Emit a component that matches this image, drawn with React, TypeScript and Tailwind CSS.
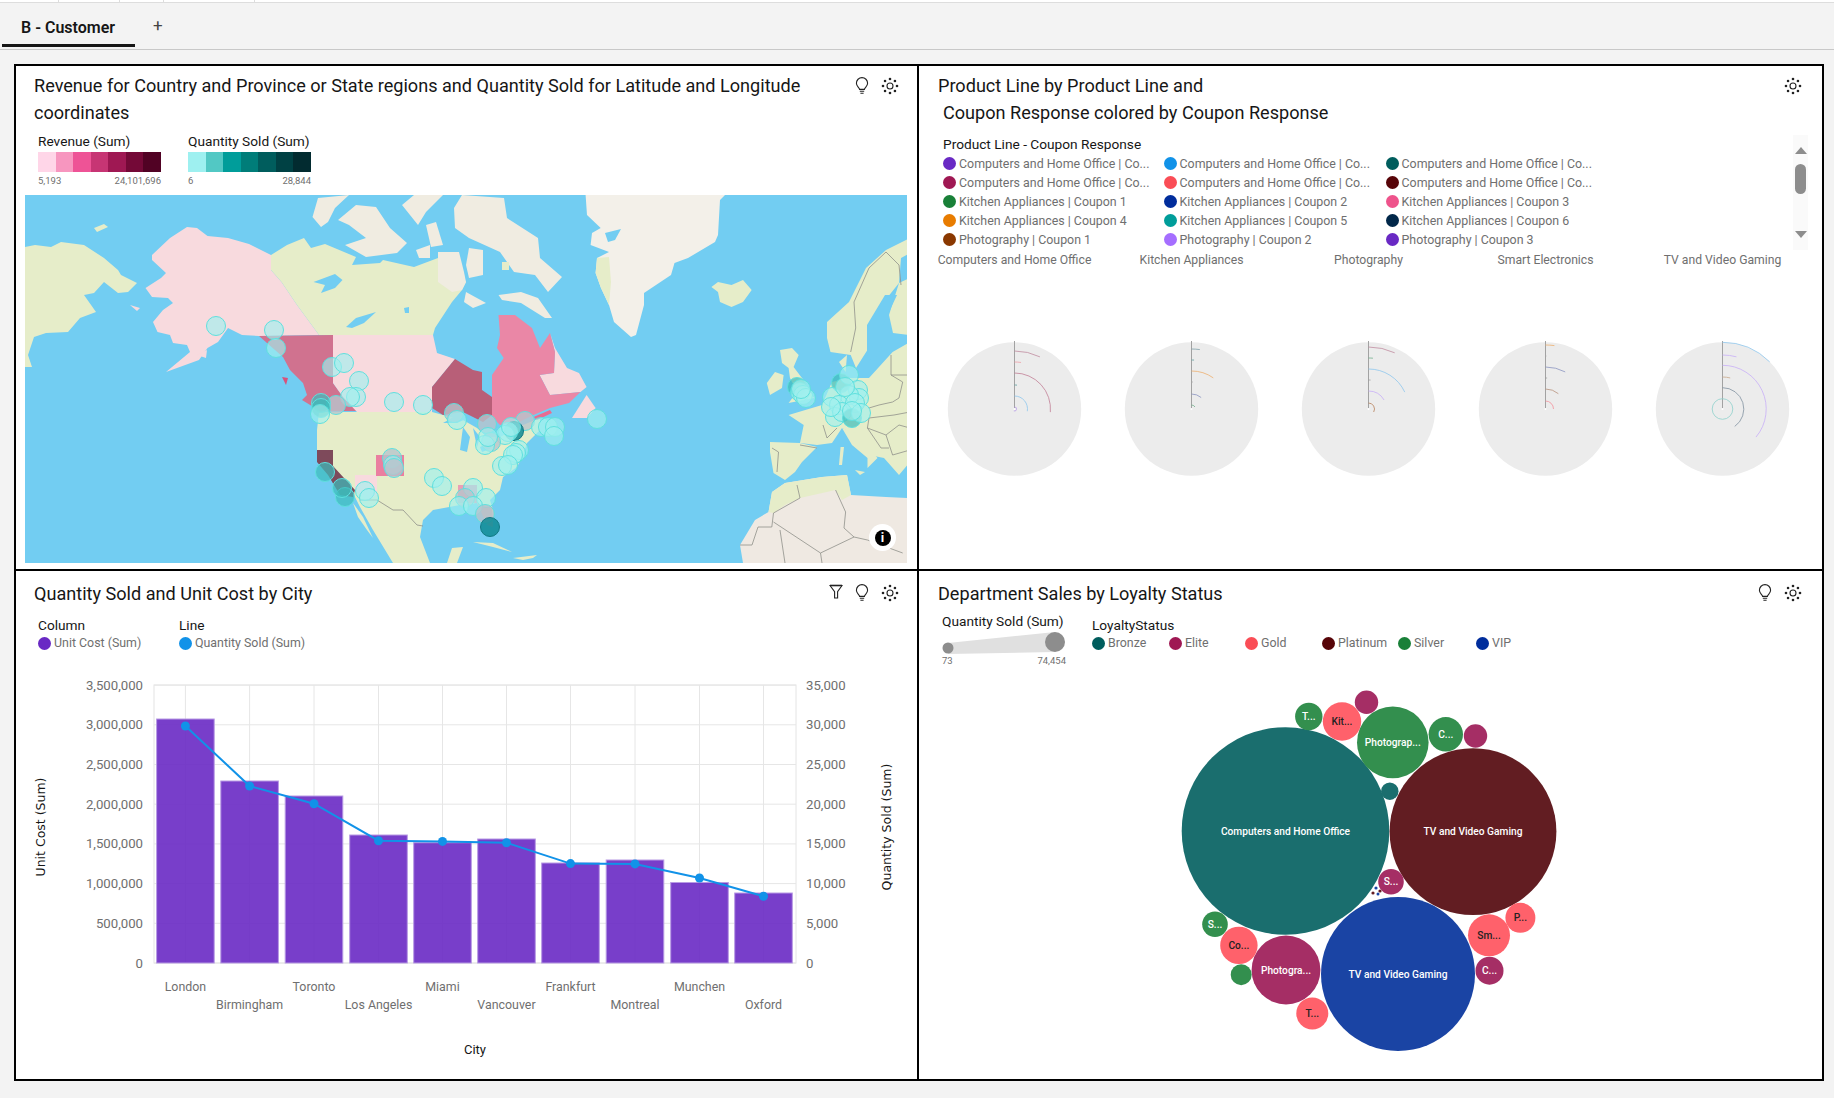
import React from 'react';

const FONT = "font-['Roboto','Liberation_Sans',sans-serif]";

function GearIcon() {
  const dots = [0, 45, 90, 135, 180, 225, 270, 315];
  return (
    <svg width="18" height="18" viewBox="0 0 18 18" className="shrink-0">
      <circle cx="9" cy="9" r="3" fill="none" stroke="#222" strokeWidth="1.1" />
      {dots.map((a) => (
        <circle
          key={a}
          cx={9 + 7 * Math.cos((a * Math.PI) / 180)}
          cy={9 + 7 * Math.sin((a * Math.PI) / 180)}
          r="1.3"
          fill="#222"
        />
      ))}
    </svg>
  );
}

function BulbIcon() {
  return (
    <svg width="14" height="18" viewBox="0 0 14 18" fill="none" stroke="#222" strokeWidth="1.1" className="shrink-0">
      <path d="M4.6 12.4C4.4 10.6 1.4 9.4 1.4 6.2a5.6 5.6 0 0 1 11.2 0c0 3.2-3 4.4-3.2 6.2Z" />
      <path d="M4.8 14.2h4.4M5.4 16.2h3.2" />
    </svg>
  );
}

function FunnelIcon() {
  return (
    <svg width="14" height="16" viewBox="0 0 14 16" fill="none" stroke="#222" strokeWidth="1.1" className="shrink-0">
      <path d="M1 1.5h12L8.6 7.6V14H5.6V7.6Z" />
      <path d="M1 1.5h12" strokeWidth="1.6" />
    </svg>
  );
}

const REVENUE = ['bg-[#ffd6e8]', 'bg-[#f796bf]', 'bg-[#ee5396]', 'bg-[#c73574]', 'bg-[#9f1853]', 'bg-[#740937]', 'bg-[#510224]'];
const QTY = ['bg-[#9ef0f0]', 'bg-[#52c8c4]', 'bg-[#009d9a]', 'bg-[#007d79]', 'bg-[#005d5d]', 'bg-[#004144]', 'bg-[#022b30]'];

function ScaleLegend({ title, colors, min, max }: { title: string; colors: string[]; min: string; max: string }) {
  return (
    <div className="w-[123px]">
      <div className="text-[13.7px] leading-[18px] text-[#161616] whitespace-nowrap">{title}</div>
      <div className="flex h-[20px] mt-[2px]">
        {colors.map((c) => (
          <div key={c} className={`flex-1 ${c}`} />
        ))}
      </div>
      <div className="flex justify-between text-[9.5px] leading-[12px] mt-[3px] text-[#6f6f6f]">
        <span>{min}</span>
        <span>{max}</span>
      </div>
    </div>
  );
}

// map shapes are in the frame's own pixels (882 x 368)
const WATER = '#72cdf2';
const GREEN = '#e6edc9';
const ICE = '#f0ece1';
const PALE = '#f8dade';
const LAND: [string, string][] = [
  ['0,52 10,50 26,52 36,47 59,50 79,63 93,75 96,80 112,88 103,97 93,98 79,87 69,98 59,100 71,117 55,123 43,137 21,138 9,142 3,160 7,172 0,172', GREEN],
  ['69,33 79,29 83,32 72,37', GREEN],
  ['162,32 172,33 182.5,41 203,43 224,49 246,60 246,75 256.5,87 272,110 294,140 234,141 217,140 203,133 193,147 182.5,153 174,165 141,177 165,157 162,150 148,148 145,140 132.5,137 128,127 138,115 148,108 143,103 127,102 120.5,93 136,83 141,78 127,65 127,60 145,43', PALE],
  ['105,110 115,113 112,116', PALE],
  ['172,160 182,155 181,163', PALE],
  ['246,60 262,50 279,43 286,53 300,49 331,62 327,70 355,68 358,65 389,72 413,63 441,87 437,95 427,107 410,133 408,140 294,140 272,110 256.5,87 246,75', GREEN],
  ['293,3 324,0 310,13 303,27 296,32 287.5,22', ICE],
  ['313,25 331,10 351,12 365,33 382,48 372,58 341,62 320,50 341,43 324,30', ICE],
  ['377,10 389,0 418,0 401,17 393,30', ICE],
  ['401,30 411,27 418,50 406,52', ICE],
  ['391,55 405,50 405,63 394,63', ICE],
  ['413,57 434,57 439,77 441,87 437,95 427,97 413,87', ICE],
  ['429,13 437,0 479,3 482,23 513,43 515,63 537,82 523,97 510,80 489,77 475,57 444,43 430,33', ICE],
  ['444,53 458,55 458,80 444,83 441,70', ICE],
  ['473.5,100 496,97 513,103 527,123 520,123 496,108 477,105', ICE],
  ['441,97 461,108 448,113 439,107', ICE],
  ['477,67 484,67 484,75 477,75', GREEN],
  ['234,141 308,140 308,188 318,202 332,216 295,216 277,205 282,200 278,188 265,175 258,162', '#d0728f'],
  ['257,182 263,183 261,190', '#d8527c'],
  ['308,140 408,140 412,158 430,164 407,192 407,217 332,217 318,202 308,188', PALE],
  ['294,217 407,217 418,220 438,225 452,233 462,242 475,242 498,230 515,223 515,235 502,248 498,260 492,272 478,282 475,295 465,305 468,315 467,332 462,325 452,308 435,310 408,315 398,325 395,342 405,368 368,368 348,335 335,312 330,302 308,275 292,260 292,235', GREEN],
  ['430,164 448,175 457,177 457,195 467,202 467,220 458,227 448,222 438,217 418,220 407,213 407,192', '#b85f78'],
  ['525,138 530,157 529,178 514.6,180 525,200 555.5,197 561.6,192 554,178 542,173 530,153', PALE],
  ['473.5,120 490,120 507,133 515,153 525,138 530,157 529,178 514.6,180 525,200 555.5,197 544,208 525,213 508.5,220 492,228 475,230 467,222 467,180 478.7,163 472,153 475,140', '#ea87a6'],
  ['561.6,200 570.6,213 562,223 547,223', PALE],
  ['508.5,222 525,215 527,218 512,225', '#ea6c92'],
  ['292,255 308,255 308,271 330,295 328,302 315,300 303,280 292,267', '#7e4a5b'],
  ['330,280 352,280 352,300 342,305 330,295', PALE],
  ['351,260 379,260 379,281 351,281', '#ea7fa0'],
  ['433,290 452,290 452,308 433,308', '#ea9fb5'],
  ['452,308 467,312 468,332 462,330', '#c3b7bf'],
  ['328,308 338,322 348,343 342,335 333,322', GREEN],
  ['422,368 427,353 438,352 432,368', GREEN],
  ['448,347 468,348 487,357 468,352', GREEN],
  ['488,363 512,360 508,363 498,365', GREEN],
  ['560.6,0 700,0 695,5 693,40 690,47 663,63 649.5,68 646,80 619,98 619,110 611,140 606,142 589,127 584,110 576,93 570.6,78 572,63 584,57 565.6,50 567,38 575.7,33 562,20', '#f3f0e9'],
  ['570.6,78 572,63 584,62 586,87 584,110 576,93', GREEN],
  ['686.4,92 693,87 706.5,90 718,85 726.7,95 718,107 706.5,112 695,107 693,97', GREEN],
  ['755,155 767,153 773.7,160 768.6,172 780,187 788.8,203 763.6,208 772,197 765,183 763.6,173 757,168', GREEN],
  ['741.8,188 750,177 758.6,180 757,193 745,200', GREEN],
  ['802,127 824,107 841,73 861,55 885,43 885,58 876,63 874,88 854,113 849,130 847.5,147 831,173 825.7,160 805.5,157 802,143', GREEN],
  ['864,120 874,88 885,83 885,140 868,138', GREEN],
  ['814,167 822,160 820.6,177', GREEN],
  ['763.6,220 797,210 807,187 824,183 844,183 867.6,157 885,147 885,267 874,280 859,263 844,260 847.5,267 831,240 817,233 807,248 792,250 775,248 778.7,230', GREEN],
  ['817,233 831,238 852.5,263 842.5,273 842.5,263 827,250', GREEN],
  ['745,247 775,248 792,252 777,267 770,277 760,285 748.5,278 745,257', GREEN],
  ['815.6,252 819,252 817,270 814,270', GREEN],
  ['830,275 840,277 835,280', GREEN],
  ['715,350 730,325 743.5,317 747,297 760,288 797,282 822,280 826,300 861,302 885,303 885,368 718,368', '#efe9e2'],
  ['743.5,317 747,297 760,288 797,282 822,280 826,300 817,305 810.6,295 775,303 760,310 748.5,318', GREEN],
];
const LAKES = [
  '288.5,87 310,79 317.5,85 310,93 296,98 300,90',
  '321,132 331,123 351,117 339,128 327,133',
  '379,113 384,112 384,118 380,118',
  '418,228 432,220 443,223 432,228',
  '435,255 438,232 445,242 442,257',
  '448,233 455,242 452,252',
  '455,252 468,246 465,254 457,257',
  '842,130 860,100 872,100 858,130 858,150 848,168 842,160',
  '580,38 596,34 590,45 583,47',
];
const BORDERS = [
  'M748.5 318L775 303L772 290',
  'M748.5 327L795.5 358L829 342L842.4 345L877.7 358',
  'M810.6 295L820.6 317L819 333L829 342',
  'M755 335L760 368M795.5 358L797 368',
  'M715 350L727 350L733 332L746.8 332L748.5 318',
  'M861 57L844 73L829 107L830.7 133L825.7 157',
  'M861 57L874 70L876 90',
  'M844 213L854 210L867.6 207L874 203L877.7 187L866 180L866 160',
  'M844 223L869 220L885 217',
  'M842.4 233L861 240L867.6 260L885 255',
  'M861 240L874 230L885 233',
  'M844 223L842.4 233L856 253L864 253',
  'M866 180L885 180M798 230L802 243L812 233',
  'M775 250L792 253M747 253L753.5 257L752 277',
  'M335 305L352 305L368 315L378 315L392 330L398 331',
];
const DOTS: [number, number, number][] = [
  [191, 131, 0], [249, 135, 0], [251, 153, 0], [307, 172, 0], [319, 168, 0], [334, 186, 0], [331, 202, 0], [325, 202, 0],
  [369, 207, 0], [398, 210, 0], [311, 210, 3], [296, 208, 1], [296, 213, 1], [295, 219, 0], [429, 218, 3], [432, 225, 0],
  [462, 229, 3], [500, 226, 3], [489, 236, 2], [483, 237, 0], [480, 240, 0], [486, 232, 0], [466, 247, 3], [460, 250, 0],
  [463, 242, 0], [516, 232, 0], [523, 232, 0], [530, 232, 0], [529, 241, 0], [572, 224, 0], [494, 255, 0], [491, 258, 0],
  [488, 260, 0], [477, 271, 0], [483, 270, 0], [367, 263, 3], [368, 270, 0], [369, 273, 3], [409, 283, 0], [417, 291, 0],
  [340, 296, 0], [344, 303, 0], [300, 277, 1], [320, 302, 1], [317, 293, 1], [448, 293, 0], [440, 303, 3], [461, 303, 0],
  [434, 311, 0], [448, 311, 0], [460, 319, 3], [465, 332, 2],
  [772, 192, 1], [775, 197, 0], [778, 200, 0], [781, 203, 0], [776, 194, 0],
  [816, 188, 1], [824, 180, 0], [833, 195, 0], [834, 203, 0], [824, 200, 0], [807, 202, 0], [814, 210, 0], [820, 192, 0],
  [830, 208, 0], [810, 222, 0], [817, 217, 0], [827, 223, 1], [836, 218, 0], [827, 216, 0], [806, 212, 0],
];
const DOT_FILL = ['#a0f0ee', '#3cbcbc', '#0e8a94', '#b8c4cc'];
const DOT_ALPHA = [0.65, 0.7, 0.85, 0.8];

function MapView() {
  return (
    <div className="relative w-[882px] h-[368px] ml-[9px] mt-[8px] overflow-hidden">
      <svg viewBox="0 0 882 368" className="block w-full h-full">
        <rect width="882" height="368" fill={WATER} />
        {LAND.map(([points, fill], i) => (
          <polygon key={i} points={points} fill={fill} />
        ))}
        {LAKES.map((points, i) => (
          <polygon key={i} points={points} fill={WATER} />
        ))}
        {BORDERS.map((d, i) => (
          <path key={i} d={d} fill="none" stroke="#8f918a" strokeWidth="0.8" />
        ))}
        {DOTS.map(([x, y, kind], i) => (
          <circle
            key={i}
            cx={x}
            cy={y}
            r="9.5"
            fill={DOT_FILL[kind]}
            fillOpacity={DOT_ALPHA[kind]}
            stroke={kind === 2 ? '#127a84' : '#5fe0de'}
            strokeWidth="1"
          />
        ))}
      </svg>
      <div className="absolute right-[11px] bottom-[12px] w-[27px] h-[27px] rounded-full bg-white flex items-center justify-center">
        <span className="w-[16px] h-[16px] rounded-full bg-black flex items-center justify-center text-white text-[13px] font-bold leading-none">
          i
        </span>
      </div>
    </div>
  );
}

const COUPONS: [string, string][] = [
  ['bg-[#6929c4]', 'Computers and Home Office | Co...'],
  ['bg-[#1192e8]', 'Computers and Home Office | Co...'],
  ['bg-[#005d5d]', 'Computers and Home Office | Co...'],
  ['bg-[#9f1853]', 'Computers and Home Office | Co...'],
  ['bg-[#fa4d56]', 'Computers and Home Office | Co...'],
  ['bg-[#570408]', 'Computers and Home Office | Co...'],
  ['bg-[#198038]', 'Kitchen Appliances | Coupon 1'],
  ['bg-[#002d9c]', 'Kitchen Appliances | Coupon 2'],
  ['bg-[#ee538b]', 'Kitchen Appliances | Coupon 3'],
  ['bg-[#e87c00]', 'Kitchen Appliances | Coupon 4'],
  ['bg-[#009d9a]', 'Kitchen Appliances | Coupon 5'],
  ['bg-[#012749]', 'Kitchen Appliances | Coupon 6'],
  ['bg-[#8a3800]', 'Photography | Coupon 1'],
  ['bg-[#a56eff]', 'Photography | Coupon 2'],
  ['bg-[#6929c4]', 'Photography | Coupon 3'],
];

function Swatch({ color, label }: { color: string; label: string }) {
  return (
    <div className="flex items-center gap-[3px] whitespace-nowrap text-[12.4px] leading-[18px] text-[#6f6f6f]">
      <span className={`w-[13px] h-[13px] rounded-full shrink-0 ${color}`} />
      <span>{label}</span>
    </div>
  );
}

type Arc = [number, number, string];

const RADIALS: { label: string; arcs: Arc[] }[] = [
  {
    label: 'Computers and Home Office',
    arcs: [[58, 26, '#c08ca0'], [47, 8, '#f0a0a8'], [36, 95, '#c27f96'], [24, 6, '#5c9c9c'], [13, 100, '#8ec6ee'], [2, 200, '#b89ae8']],
  },
  {
    label: 'Kitchen Appliances',
    arcs: [[60, 8, '#7f9fa8'], [49, 3, '#5c9c9c'], [38, 35, '#eeb070'], [27, 3, '#aaa'], [15, 40, '#8a94c0'], [4, 60, '#6fae8a']],
  },
  {
    label: 'Photography',
    arcs: [[62, 25, '#c08ca0'], [51, 5, '#6fae8a'], [40, 65, '#8ec6ee'], [29, 4, '#999'], [18, 60, '#c8aef8'], [6, 120, '#b8825c']],
  },
  {
    label: 'Smart Electronics',
    arcs: [[64, 8, '#eeb070'], [53, 1, '#aaa'], [42, 28, '#8a94c0'], [31, 3, '#999'], [20, 40, '#b8927c'], [8, 90, '#f4909a']],
  },
  {
    label: 'TV and Video Gaming',
    arcs: [[66.7, 45, '#8ec6ee'], [54, 15, '#c8aef8'], [43.7, 130, '#c8aef8'], [32, 14, '#c8a88c'], [21.3, 145, '#8090a0'], [10.3, 360, '#8ed0cc']],
  },
];

function arcPath(cx: number, cy: number, r: number, sweep: number) {
  const a = (sweep * Math.PI) / 180;
  const x = cx + r * Math.sin(a);
  const y = cy - r * Math.cos(a);
  return `M${cx} ${cy - r}A${r} ${r} 0 ${sweep > 180 ? 1 : 0} 1 ${x} ${y}`;
}

function Radial({ arcs }: { arcs: Arc[] }) {
  return (
    <svg width="177" height="140" viewBox="0 0 177 140" className="shrink-0">
      <circle cx="88.5" cy="70" r="66.7" fill="#ececec" />
      <line x1="88.5" y1="2" x2="88.5" y2="70" stroke="#a2a2a2" strokeWidth="1" />
      {arcs.map(([r, sweep, color]) =>
        sweep >= 360 ? (
          <circle key={r} cx="88.5" cy="70" r={r} fill="none" stroke={color} strokeWidth="0.8" />
        ) : (
          <path key={r} d={arcPath(88.5, 70, r, sweep)} fill="none" stroke={color} strokeWidth="0.8" />
        )
      )}
      <circle cx="88.5" cy="70" r="1" fill="#fff" />
    </svg>
  );
}

const BAR_X = [185.4, 249.6, 314, 378.5, 442.5, 506.5, 570.5, 635, 699.5, 763.5];
const BAR_TOP = [719, 781, 796, 835, 842.7, 839, 863, 860, 882.5, 893];
const LINE_Y = [726, 786, 803.7, 840.7, 841.4, 842.7, 863.6, 863.9, 878, 896.3];
const CITIES = ['London', 'Birmingham', 'Toronto', 'Los Angeles', 'Miami', 'Vancouver', 'Frankfurt', 'Montreal', 'Munchen', 'Oxford'];
const LEFT_TICKS = ['0', '500,000', '1,000,000', '1,500,000', '2,000,000', '2,500,000', '3,000,000', '3,500,000'];
const RIGHT_TICKS = ['0', '5,000', '10,000', '15,000', '20,000', '25,000', '30,000', '35,000'];

// viewBox uses page coordinates so the numbers line up with the screenshot
function ComboChart() {
  const tickY = (i: number) => 963 - i * 39.7;
  return (
    <svg viewBox="16 664 901 414" width="901" height="414" className="block mt-[12px]" fontFamily="Roboto, 'Liberation Sans', sans-serif">
      <rect x="154" y="685" width="642" height="278" fill="#fff" stroke="#e4e4e4" />
      {LEFT_TICKS.map((t, i) => (
        <g key={t}>
          <line x1="154" x2="796" y1={tickY(i)} y2={tickY(i)} stroke="#e6e6e6" />
          <text x="143" y={tickY(i) + 4.5} textAnchor="end" fontSize="13.2" fill="#6f6f6f">{t}</text>
          <text x="806" y={tickY(i) + 4.5} fontSize="13.2" fill="#6f6f6f">{RIGHT_TICKS[i]}</text>
        </g>
      ))}
      {BAR_X.map((x) => (
        <line key={x} x1={x} x2={x} y1="685" y2="963" stroke="#e6e6e6" />
      ))}
      {BAR_X.map((x, i) => (
        <rect key={x} x={x - 28.8} y={BAR_TOP[i]} width="57.6" height={963 - BAR_TOP[i]} fill="#6929c4" fillOpacity="0.9" stroke="#b79ae4" strokeWidth="1" />
      ))}
      <polyline points={BAR_X.map((x, i) => `${x},${LINE_Y[i]}`).join(' ')} fill="none" stroke="#1192e8" strokeWidth="2" />
      {BAR_X.map((x, i) => (
        <circle key={x} cx={x} cy={LINE_Y[i]} r="4.5" fill="#1192e8" />
      ))}
      {CITIES.map((c, i) => (
        <text key={c} x={BAR_X[i]} y={i % 2 ? 1009 : 991} textAnchor="middle" fontSize="12.4" fill="#6f6f6f">{c}</text>
      ))}
      <text x="475" y="1054" textAnchor="middle" fontSize="13" fill="#161616">City</text>
      <text transform="translate(45 827) rotate(-90)" textAnchor="middle" fontSize="12.5" fontFamily="'DejaVu Sans', sans-serif" fill="#161616">Unit Cost (Sum)</text>
      <text transform="translate(891 827) rotate(-90)" textAnchor="middle" fontSize="12.5" fontFamily="'DejaVu Sans', sans-serif" fill="#161616">Quantity Sold (Sum)</text>
    </svg>
  );
}

type Bubble = [number, number, number, string, string?, string?];

const BUBBLES: Bubble[] = [
  [1285.5, 831, 103.8, '#1a6e6e', 'Computers and Home Office'],
  [1473, 831.6, 83.4, '#621d22', 'TV and Video Gaming'],
  [1398, 974, 77, '#1a44a4', 'TV and Video Gaming'],
  [1392.8, 742.4, 35.8, '#338f4e', 'Photograp...'],
  [1286, 970, 34.4, '#a52e65', 'Photogra...'],
  [1342, 721.5, 19.2, '#ff616b', 'Kit...', '#222'],
  [1308.8, 716.5, 13.7, '#338f4e', 'T...'],
  [1366.5, 702.3, 11.7, '#a52e65'],
  [1445.8, 734.3, 17.2, '#338f4e', 'C...'],
  [1475.5, 736, 11.7, '#a52e65'],
  [1389.8, 791.2, 8.7, '#1a6e6e'],
  [1391, 881.8, 12.8, '#a52e65', 'S...'],
  [1520.4, 917.8, 15, '#ff616b', 'P...', '#222'],
  [1489, 935.3, 21, '#ff616b', 'Sm...', '#222'],
  [1489.5, 970.7, 14, '#a52e65', 'C...'],
  [1215, 924.2, 12.8, '#338f4e', 'S...'],
  [1238.9, 945.4, 18.7, '#ff616b', 'Co...', '#222'],
  [1241.2, 974.7, 10.5, '#338f4e'],
  [1312.3, 1013.4, 16, '#ff616b', 'T...', '#222'],
  [1373, 893, 1.6, '#621d22'],
  [1376, 888, 1.6, '#1a44a4'],
  [1380, 891, 1.6, '#621d22'],
  [1378, 894, 1.5, '#1a44a4'],
];

function BubbleChart() {
  return (
    <svg viewBox="919 664 901 414" width="901" height="414" className="block" fontFamily="Roboto, 'Liberation Sans', sans-serif">
      {BUBBLES.map(([x, y, r, fill, label, ink]) => (
        <g key={`${x}-${y}`}>
          <circle cx={x} cy={y} r={r} fill={fill} />
          {label && (
            <text x={x} y={y + 3.5} textAnchor="middle" fontSize="10.2" fontWeight="500" fill={ink ?? '#fff'}>{label}</text>
          )}
        </g>
      ))}
    </svg>
  );
}

const LOYALTY: [string, string, string][] = [
  ['bg-[#005d5d]', 'Bronze', 'w-[77px]'],
  ['bg-[#9f1853]', 'Elite', 'w-[76px]'],
  ['bg-[#fa4d56]', 'Gold', 'w-[77px]'],
  ['bg-[#570408]', 'Platinum', 'w-[76px]'],
  ['bg-[#198038]', 'Silver', 'w-[78px]'],
  ['bg-[#002d9c]', 'VIP', 'w-[40px]'],
];

function SizeLegend() {
  return (
    <div className="w-[124px]">
      <div className="text-[13.7px] leading-[16px] text-[#161616] whitespace-nowrap">Quantity Sold (Sum)</div>
      <svg width="124" height="24" viewBox="0 0 124 24" className="block mt-[1px]">
        <polygon points="6,13 113,2 113,22 6,24" fill="#e0e0e0" />
        <circle cx="6" cy="18" r="5.5" fill="#8d8d8d" />
        <circle cx="113" cy="12" r="10" fill="#8d8d8d" />
      </svg>
      <div className="flex justify-between text-[9.5px] leading-[12px] mt-[1px] text-[#6f6f6f]">
        <span>73</span>
        <span>74,454</span>
      </div>
    </div>
  );
}

function Title({ children }: { children: React.ReactNode }) {
  return <div className="text-[18.1px] leading-[27px] text-[#161616]">{children}</div>;
}

export default function App() {
  return (
    <div className={`w-full h-[1098px] bg-[#f3f3f3] overflow-hidden ${FONT}`}>
      <div className="h-[3px] bg-white border-b border-[#ddd] flex">
        <div className="w-[59px] border-r border-[#ddd]" />
        <div className="w-[61px] border-r border-[#ddd]" />
        <div className="w-[44px] border-r border-[#ddd]" />
        <div className="w-[91px] border-r border-[#ddd]" />
      </div>
      <div className="h-[47px] border-b border-[#c8c8c8] flex items-stretch">
        <div className="ml-[2px] w-[133px] pl-[19px] pt-[14px] mb-[2px] border-b-[3px] border-[#161616] text-[16px] leading-[22px] font-semibold text-[#161616]">
          B - Customer
        </div>
        <div className="ml-[18px] pt-[11px] text-[17px] leading-[22px] text-[#444]">+</div>
      </div>
      <div className="ml-[14px] mt-[14px] w-[1810px] h-[1017px] border-2 border-black bg-white grid grid-cols-[903px_903px] grid-rows-[505px_510px]">
        {/* map */}
        <div className="border-r-2 border-b-2 border-black">
          <div className="flex justify-between pl-[18px] pr-[18px] pt-[6px]">
            <div className="w-[780px]">
              <Title>Revenue for Country and Province or State regions and Quantity Sold for Latitude and Longitude coordinates</Title>
            </div>
            <div className="flex items-start gap-[12px] pt-[5px]">
              <BulbIcon />
              <GearIcon />
            </div>
          </div>
          <div className="flex gap-[27px] pl-[22px] mt-[6px]">
            <ScaleLegend title="Revenue (Sum)" colors={REVENUE} min="5,193" max="24,101,696" />
            <ScaleLegend title="Quantity Sold (Sum)" colors={QTY} min="6" max="28,844" />
          </div>
          <MapView />
        </div>

        {/* product lines */}
        <div className="border-b-2 border-black">
          <div className="flex justify-between pl-[19px] pr-[20px] pt-[6px]">
            <div>
              <Title>Product Line by Product Line and</Title>
              <div className="pl-[5px]">
                <Title>Coupon Response colored by Coupon Response</Title>
              </div>
            </div>
            <div className="pt-[5px]">
              <GearIcon />
            </div>
          </div>
          <div className="flex justify-between pl-[24px] pr-[14px] mt-[9px]">
            <div>
              <div className="text-[13.7px] leading-[19px] text-[#161616]">Product Line - Coupon Response</div>
              <div className="grid grid-cols-[220.5px_222px_auto] auto-rows-[19px] items-center">
                {COUPONS.map(([color, label], i) => (
                  <Swatch key={i} color={color} label={label} />
                ))}
              </div>
            </div>
            <div className="w-[15px] h-[115px] bg-[#fafafa] flex flex-col items-center pt-[12px]">
              <div className="w-0 h-0 border-x-[6px] border-x-transparent border-b-[7px] border-b-[#8d8d8d]" />
              <div className="w-[11px] h-[30px] mt-[10px] rounded-full bg-[#8d8d8d]" />
              <div className="w-0 h-0 mt-[37px] border-x-[6px] border-x-transparent border-t-[7px] border-t-[#8d8d8d]" />
            </div>
          </div>
          <div className="flex pl-[7px] mt-[1px]">
            {RADIALS.map((r) => (
              <div key={r.label} className="w-[177px] text-center text-[12.2px] leading-[18px] text-[#6f6f6f] whitespace-nowrap">
                {r.label}
              </div>
            ))}
          </div>
          <div className="flex pl-[7px] mt-[70px]">
            {RADIALS.map((r) => (
              <Radial key={r.label} arcs={r.arcs} />
            ))}
          </div>
        </div>

        {/* combo chart */}
        <div className="border-r-2 border-black">
          <div className="flex justify-between pl-[18px] pr-[18px] pt-[9px]">
            <Title>Quantity Sold and Unit Cost by City</Title>
            <div className="flex items-start gap-[12px] pt-[4px]">
              <FunnelIcon />
              <BulbIcon />
              <GearIcon />
            </div>
          </div>
          <div className="flex pl-[22px] mt-[10px]">
            <div className="w-[141px]">
              <div className="text-[13.7px] leading-[17px] text-[#161616]">Column</div>
              <Swatch color="bg-[#6929c4]" label="Unit Cost (Sum)" />
            </div>
            <div>
              <div className="text-[13.7px] leading-[17px] text-[#161616]">Line</div>
              <Swatch color="bg-[#1192e8]" label="Quantity Sold (Sum)" />
            </div>
          </div>
          <ComboChart />
        </div>

        {/* bubbles */}
        <div>
          <div className="flex justify-between pl-[19px] pr-[20px] pt-[9px]">
            <Title>Department Sales by Loyalty Status</Title>
            <div className="flex items-start gap-[12px] pt-[4px]">
              <BulbIcon />
              <GearIcon />
            </div>
          </div>
          <div className="flex pl-[23px] mt-[6px] h-[51px]">
            <SizeLegend />
            <div className="ml-[26px] pt-[4px]">
              <div className="text-[13.7px] leading-[17px] text-[#161616]">LoyaltyStatus</div>
              <div className="flex">
                {LOYALTY.map(([color, label, width]) => (
                  <div key={label} className={width}>
                    <Swatch color={color} label={label} />
                  </div>
                ))}
              </div>
            </div>
          </div>
          <BubbleChart />
        </div>
      </div>
    </div>
  );
}
